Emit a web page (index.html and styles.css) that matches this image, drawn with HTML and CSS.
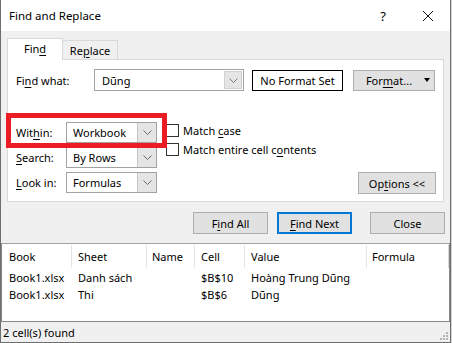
FILE: index.html
```html
<!DOCTYPE html>
<html>
<head>
<meta charset="utf-8">
<link rel="stylesheet" href="styles.css">
</head>
<body>
<div class="window">
  <div class="titlebar">
    <span class="title">Find and Replace</span>
    <span class="help">?</span>
    <span class="close"><svg width="12" height="12" viewBox="0 0 12 12"><path d="M1 1 L11 11 M11 1 L1 11" stroke="#111" stroke-width="1" fill="none"/></svg></span>
  </div>
  <div class="body">
    <div class="tabs">
      <div class="tab active"><span>Fin<u>d</u></span></div>
      <div class="tab"><span>Re<u>p</u>lace</span></div>
    </div>
    <div class="panel">
      <div class="row1">
        <div class="label wide">Fi<u>n</u>d what:</div>
        <div class="combo combo-find">
          <span class="value">Dũng</span>
          <span class="drop small"><svg width="9" height="5" viewBox="0 0 9 5"><path d="M0.5 0.5 L4.5 4.5 L8.5 0.5" stroke="#7a7a7a" fill="none"/></svg></span>
        </div>
        <div class="noformat">No Format Set</div>
        <div class="btn format"><span>For<u>m</u>at...</span><span class="caret"></span></div>
      </div>
      <div class="row2">
        <div class="selects">
          <div class="selrow">
            <div class="label">Wit<u>h</u>in:</div>
            <div class="combo combo-sel"><span class="value">Workbook</span><span class="drop"><svg width="9" height="5" viewBox="0 0 9 5"><path d="M0.5 0.5 L4.5 4.5 L8.5 0.5" stroke="#6a6a6a" fill="none"/></svg></span></div>
          </div>
          <div class="selrow">
            <div class="label"><u>S</u>earch:</div>
            <div class="combo combo-sel"><span class="value">By Rows</span><span class="drop"><svg width="9" height="5" viewBox="0 0 9 5"><path d="M0.5 0.5 L4.5 4.5 L8.5 0.5" stroke="#6a6a6a" fill="none"/></svg></span></div>
          </div>
          <div class="selrow">
            <div class="label"><u>L</u>ook in:</div>
            <div class="combo combo-sel"><span class="value">Formulas</span><span class="drop"><svg width="9" height="5" viewBox="0 0 9 5"><path d="M0.5 0.5 L4.5 4.5 L8.5 0.5" stroke="#6a6a6a" fill="none"/></svg></span></div>
          </div>
        </div>
        <div class="checks">
          <div class="check first"><span class="box"></span><span>Match <u>c</u>ase</span></div>
          <div class="check"><span class="box"></span><span>Match entire cell c<u>o</u>ntents</span></div>
        </div>
        <div class="optwrap">
          <div class="btn options"><span>Op<u>t</u>ions &lt;&lt;</span></div>
        </div>
      </div>
      <div class="highlight"></div>
    </div>
    <div class="actions">
      <div class="btn action"><span>F<u>i</u>nd All</span></div>
      <div class="btn action primary"><span><u>F</u>ind Next</span></div>
      <div class="btn action close-btn"><span>Close</span></div>
    </div>
    <div class="results">
      <div class="rrow head">
        <div class="c c1">Book</div>
        <div class="c c2">Sheet</div>
        <div class="c c3">Name</div>
        <div class="c c4">Cell</div>
        <div class="c c5">Value</div>
        <div class="c c6">Formula</div>
      </div>
      <div class="rrow">
        <div class="c c1">Book1.xlsx</div>
        <div class="c c2">Danh sách</div>
        <div class="c c3"></div>
        <div class="c c4">$B$10</div>
        <div class="c c5">Hoàng Trung Dũng</div>
        <div class="c c6"></div>
      </div>
      <div class="rrow">
        <div class="c c1">Book1.xlsx</div>
        <div class="c c2">Thi</div>
        <div class="c c3"></div>
        <div class="c c4">$B$6</div>
        <div class="c c5">Dũng</div>
        <div class="c c6"></div>
      </div>
    </div>
    <div class="status">
      <span>2 cell(s) found</span>
      <svg class="grip" width="9" height="9" viewBox="0 0 9 9">
        <rect x="6" y="0" width="2" height="2" fill="#b4b4b4"/>
        <rect x="3" y="3" width="2" height="2" fill="#b4b4b4"/>
        <rect x="6" y="3" width="2" height="2" fill="#b4b4b4"/>
        <rect x="0" y="6" width="2" height="2" fill="#b4b4b4"/>
        <rect x="3" y="6" width="2" height="2" fill="#b4b4b4"/>
        <rect x="6" y="6" width="2" height="2" fill="#b4b4b4"/>
      </svg>
    </div>
  </div>
</div>
</body>
</html>
```
FILE: styles.css
```css
* { box-sizing: border-box; }
html, body { margin: 0; padding: 0; }
body {
  background: #d4d4d4;
  font-family: "Segoe UI", "Noto Sans", "Open Sans", sans-serif;
  font-size: 11px;
  color: #000;
  width: 452px;
  height: 343px;
  overflow: hidden;
}
u { text-decoration: underline; text-underline-offset: 2px; }
.window {
  width: 451px;
  height: 343px;
  border: 1px solid #6e6e6e;
  border-top: none;
  background: #f0f0f0;
  display: flex;
  flex-direction: column;
}
.titlebar {
  height: 31px;
  background: #fff;
  display: flex;
  align-items: center;
  padding-left: 8px;
}
.title { flex: 1; font-size: 11.5px; }
.help { width: 14px; margin-right: 32px; text-align: center; font-size: 13px; }
.close { width: 12px; height: 12px; margin-right: 16px; display: flex; }
.body { flex: 1; display: flex; flex-direction: column; }
.tabs {
  margin-top: 7px;
  height: 21px;
  display: flex;
  align-items: flex-end;
  padding-left: 6px;
}
.tab {
  height: 19px;
  width: 55px;
  border: 1px solid #d9d9d9;
  border-bottom: none;
  border-left: none;
  display: flex;
  align-items: center;
  justify-content: center;
  background: #f0f0f0;
}
.tab.active {
  height: 22px;
  width: 56px;
  margin-bottom: -1px;
  border-left: 1px solid #d9d9d9;
  background: #fff;
  position: relative;
  z-index: 1;
  padding-bottom: 2px;
}
.panel {
  margin: 0 6px;
  height: 143px;
  background: #fff;
  border: 1px solid #d9d9d9;
  padding: 9px 7px 0 8px;
  position: relative;
}
.row1 { display: flex; align-items: center; height: 22px; }
.label { width: 50px; flex: none; }
.label.wide { width: 78px; }
.combo {
  border: 1px solid #a2a2a2;
  background: #fff;
  display: flex;
  align-items: stretch;
  flex: none;
}
.combo .value { flex: 1; padding-left: 6px; display: flex; align-items: center; }
.combo-find { width: 150px; height: 22px; padding: 1px; }
.combo-sel { width: 91px; height: 21px; }
.drop {
  width: 19px;
  background: #e5e5e5;
  border-left: 1px solid #c4c4c4;
  display: flex;
  align-items: center;
  justify-content: center;
}
.drop.small { width: 18px; border: 1px solid #d0d0d0; }
.noformat {
  margin-left: 8px;
  width: 91px;
  height: 21px;
  border: 1px solid #000;
  display: flex;
  align-items: center;
  justify-content: center;
}
.btn {
  background: #e1e1e1;
  border: 1px solid #adadad;
  display: flex;
  align-items: center;
  justify-content: center;
  flex: none;
}
.format {
  margin-left: 10px;
  width: 82px;
  height: 21px;
  padding-left: 8px;
}
.caret {
  margin-left: 12px;
  width: 0; height: 0;
  border-left: 3.5px solid transparent;
  border-right: 3.5px solid transparent;
  border-top: 4px solid #000;
}
.row2 { display: flex; margin-top: 31px; }
.selects { display: flex; flex-direction: column; gap: 4px; }
.selrow { display: flex; align-items: center; }
.checks { margin-left: 9px; display: flex; flex-direction: column; }
.check { display: flex; align-items: center; height: 13px; margin-top: 6px; white-space: nowrap; }
.check.first { margin-top: 2px; }
.box {
  width: 13px; height: 13px;
  border: 1px solid #333;
  background: #fff;
  margin-right: 4px;
  flex: none;
}
.optwrap { flex: 1; display: flex; justify-content: flex-end; align-items: flex-end; }
.options { width: 78px; height: 22px; margin-bottom: -1px; }
.highlight {
  position: absolute;
  left: -2px;
  top: 53px;
  width: 161px;
  height: 35px;
  border: 5px solid #ec1c24;
  pointer-events: none;
}
.actions {
  margin-top: 10px;
  height: 22px;
  display: flex;
  justify-content: flex-end;
  padding-right: 5px;
}
.action { width: 75px; height: 22px; }
.action.primary { margin-left: 9px; border: 2px solid #0078d7; }
.action.close-btn { margin-left: 18px; }
.results {
  margin-top: 9px;
  height: 79px;
  background: #fff;
  border: 1px solid #828790;
  border-top-color: #a0a0a0;
}
.rrow { display: flex; height: 17px; align-items: center; }
.rrow.head { height: 25px; align-items: stretch; padding-top: 1px; }
.c { padding-left: 6px; white-space: nowrap; flex: none; display: flex; align-items: center; }
.head .c { border-right: 1px solid #e5e5e5; height: 23px; }
.head .c6 { border-right-color: #d6d6d6; }
.c1 { width: 70px; padding-left: 7px; }
.c2 { width: 75px; }
.c3 { width: 48px; padding-left: 5px; }
.c4 { width: 50px; }
.c5 { width: 122px; }
.c6 { width: 82px; padding-left: 5px; }
.status {
  height: 20px;
  display: flex;
  align-items: center;
  justify-content: space-between;
  padding-left: 2px;
  padding-right: 1px;
}
.grip { align-self: flex-end; margin-bottom: 1px; }
```
